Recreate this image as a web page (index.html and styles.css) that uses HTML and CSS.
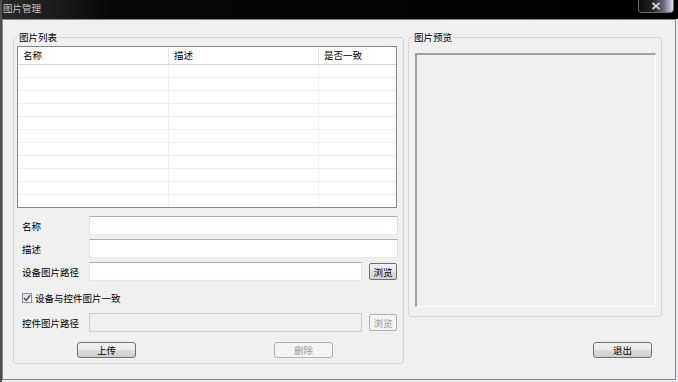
FILE: index.html
```html
<!DOCTYPE html>
<html lang="zh-CN">
<head>
<meta charset="utf-8">
<title>图片管理</title>
<link rel="stylesheet" href="styles.css">
</head>
<body>
<div class="window">
  <div class="titlebar">
    <span class="title">图片管理</span>
    <div class="close">
      <svg width="10" height="8" viewBox="0 0 10 8"><path d="M1.5 1 L8.5 7 M8.5 1 L1.5 7" stroke="#6a6a6a" stroke-width="2.6" fill="none"/><path d="M1.5 1 L8.5 7 M8.5 1 L1.5 7" stroke="#e6e6e6" stroke-width="1.2" fill="none"/></svg>
    </div>
  </div>
  <div class="client">
    <fieldset class="group group-list">
      <legend>图片列表</legend>
      <div class="grid">
        <div class="grid-head">
          <div class="cell c1">名称</div>
          <div class="cell c2">描述</div>
          <div class="cell c3">是否一致</div>
        </div>
        <div class="grid-row"><div class="cell c1"></div><div class="cell c2"></div><div class="cell c3"></div></div>
        <div class="grid-row"><div class="cell c1"></div><div class="cell c2"></div><div class="cell c3"></div></div>
        <div class="grid-row"><div class="cell c1"></div><div class="cell c2"></div><div class="cell c3"></div></div>
        <div class="grid-row"><div class="cell c1"></div><div class="cell c2"></div><div class="cell c3"></div></div>
        <div class="grid-row"><div class="cell c1"></div><div class="cell c2"></div><div class="cell c3"></div></div>
        <div class="grid-row"><div class="cell c1"></div><div class="cell c2"></div><div class="cell c3"></div></div>
        <div class="grid-row"><div class="cell c1"></div><div class="cell c2"></div><div class="cell c3"></div></div>
        <div class="grid-row"><div class="cell c1"></div><div class="cell c2"></div><div class="cell c3"></div></div>
        <div class="grid-row"><div class="cell c1"></div><div class="cell c2"></div><div class="cell c3"></div></div>
        <div class="grid-row"><div class="cell c1"></div><div class="cell c2"></div><div class="cell c3"></div></div>
        <div class="grid-row"><div class="cell c1"></div><div class="cell c2"></div><div class="cell c3"></div></div>
      </div>
      <div class="field field-first">
        <span class="label">名称</span>
        <div class="input"></div>
      </div>
      <div class="field">
        <span class="label">描述</span>
        <div class="input"></div>
      </div>
      <div class="field">
        <span class="label">设备图片路径</span>
        <div class="input short"></div>
        <button class="btn btn-small">浏览</button>
      </div>
      <div class="check-row">
        <span class="checkbox"><svg width="8" height="8" viewBox="0 0 8 8"><path d="M1 4 L3.2 6.4 L7 1.2" stroke="#3a4f78" stroke-width="1.5" fill="none"/></svg></span>
        <span>设备与控件图片一致</span>
      </div>
      <div class="field field-check">
        <span class="label">控件图片路径</span>
        <div class="input short disabled"></div>
        <button class="btn btn-small" disabled>浏览</button>
      </div>
      <div class="actions">
        <button class="btn">上传</button>
        <button class="btn" disabled>删除</button>
      </div>
    </fieldset>
    <div class="right-col">
      <fieldset class="group group-preview">
        <legend>图片预览</legend>
        <div class="preview"></div>
      </fieldset>
      <button class="btn exit">退出</button>
    </div>
  </div>
</div>
</body>
</html>
```
FILE: styles.css
```css
* { box-sizing: border-box; }
html, body { margin: 0; padding: 0; }
body {
  width: 678px;
  height: 382px;
  overflow: hidden;
  font-family: "Noto Sans CJK SC", "Noto Sans", sans-serif;
  font-size: 9.5px;
  color: #000;
  background: #ececec;
}
.window {
  width: 678px;
  height: 382px;
  display: flex;
  flex-direction: column;
  border-left: 2px solid #4e4e4e;
  background: #eceaf0;
}
.titlebar {
  height: 19px;
  flex: none;
  display: flex;
  justify-content: space-between;
  align-items: flex-start;
  padding-right: 4px;
  background: linear-gradient(90deg, #2a2a2a 0, #1e1e1e 45px, #070707 110px, #000 100%);
}
.title {
  color: #c4c4c4;
  line-height: 16px;
  padding-left: 1px;
}
.close {
  width: 36px;
  height: 13px;
  border: 1px solid #6b6b6b;
  border-top: none;
  border-radius: 0 0 4px 4px;
  display: flex;
  justify-content: center;
  align-items: center;
  background: linear-gradient(90deg, #0d0d0d 0%, #232323 40%, #6d6480 72%, #e4dcf2 100%);
}
.client {
  flex: 1;
  margin: 0 2px 2px 0;
  border: 1px solid #878787;
  background: #f0f0f0;
  display: flex;
  align-items: flex-start;
  gap: 4px;
  padding: 12px 0 0 10px;
}
.group {
  margin: 0;
  min-width: 0;
  border: 1px solid #d6d6d6;
  border-radius: 3px;
}
.group legend {
  padding: 0 2px;
  line-height: 11px;
}
.group-list {
  width: 391px;
  padding: 3px 5px 5px 3px;
}
.grid {
  width: 380px;
  height: 162px;
  border: 1px solid #828790;
  background: #fff;
  overflow: hidden;
}
.grid-head {
  display: flex;
  height: 18px;
  border-bottom: 1px solid #d5d5d5;
}
.grid-row {
  display: flex;
  height: 13px;
  border-bottom: 1px solid #efefef;
}
.cell {
  line-height: 17px;
  padding-left: 5px;
}
.c1 { width: 151px; border-right: 1px solid #e3e3e3; }
.c2 { width: 150px; border-right: 1px solid #e3e3e3; }
.c3 { flex: 1; }
.grid-row .c1, .grid-row .c2 { border-right-color: #f0f0f0; }
.field {
  display: flex;
  align-items: center;
  height: 19px;
  margin-top: 4px;
}
.field-first { margin-top: 8px; }
.field-check { margin-top: 6px; }
.label {
  width: 72px;
  flex: none;
  padding-left: 5px;
}
.input {
  width: 309px;
  height: 19px;
  border: 1px solid;
  border-color: #abadb3 #dbdfe6 #e3e9ef #e2e3ea;
  background: #fff;
}
.input.short { width: 273px; }
.input.disabled {
  background: #efefef;
  border-color: #cfcfcf;
}
.check-row {
  display: flex;
  align-items: center;
  gap: 3px;
  height: 19px;
  margin-top: 7px;
  padding-left: 5px;
}
.checkbox {
  width: 10px;
  height: 10px;
  border: 1px solid #8f8f8f;
  background: linear-gradient(135deg, #d8d8d8, #fbfbfb);
  display: flex;
  align-items: center;
  justify-content: center;
}
.btn {
  width: 59px;
  height: 16px;
  padding: 0;
  border: 1px solid #707070;
  border-radius: 3px;
  background: linear-gradient(#f2f2f2 0, #ebebeb 48%, #dddddd 52%, #cfcfcf 100%);
  font: inherit;
  line-height: 14px;
  color: #000;
}
.btn:disabled {
  border-color: #adb2b5;
  background: #f4f4f4;
  color: #9a9a9a;
}
.btn-small {
  width: 28px;
  height: 17px;
  margin-left: 7px;
  border-radius: 2px;
}
.actions {
  display: flex;
  gap: 138px;
  margin-top: 10px;
  padding-left: 60px;
}
.right-col {
  width: 254px;
  display: flex;
  flex-direction: column;
  align-items: flex-end;
}
.group-preview {
  width: 254px;
  padding: 10px 5px 9px 6px;
}
.group-preview legend { margin-left: -3px; }
.preview {
  height: 254px;
  border-top: 2px solid #a0a0a0;
  border-left: 2px solid #a0a0a0;
  border-right: 1px solid #fdfdfd;
  border-bottom: 1px solid #fdfdfd;
  background: #f0f0f0;
}
.exit {
  margin-top: 25px;
  margin-right: 10px;
}
```
